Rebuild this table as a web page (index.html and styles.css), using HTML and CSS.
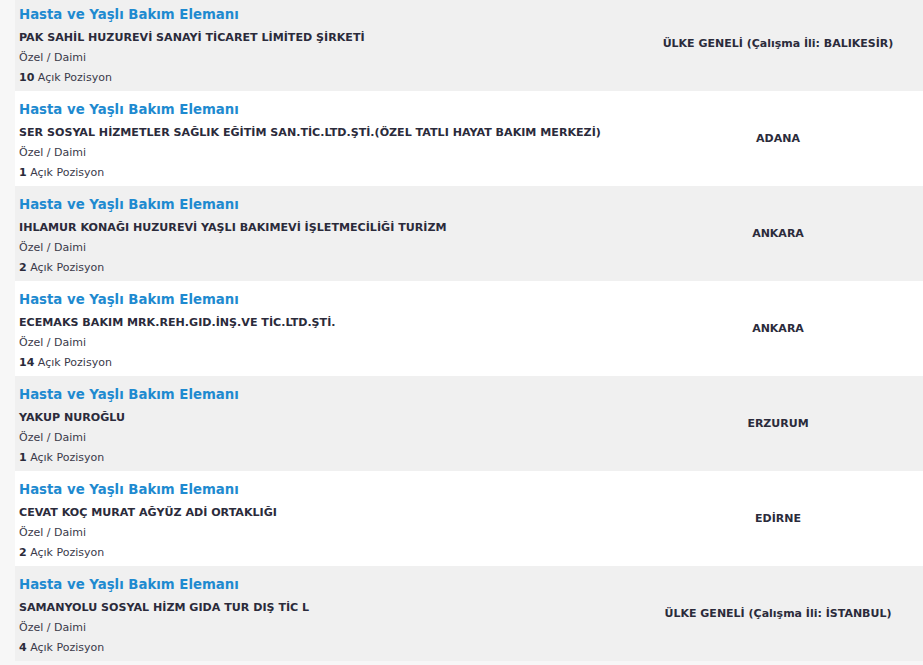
FILE: index.html
```html
<!DOCTYPE html>
<html lang="tr">
<head>
<meta charset="utf-8">
<title>İlanlar</title>
<link rel="stylesheet" href="styles.css">
</head>
<body>
<div class="list">
  <div class="row odd">
    <div class="info">
      <a class="title">Hasta ve Yaşlı Bakım Elemanı</a>
      <div class="company">PAK SAHİL HUZUREVİ SANAYİ TİCARET LİMİTED ŞİRKETİ</div>
      <div class="meta">Özel / Daimi</div>
      <div class="meta"><b>10</b> Açık Pozisyon</div>
    </div>
    <div class="loc">ÜLKE GENELİ (Çalışma İli: BALIKESİR)</div>
  </div>
  <div class="row">
    <div class="info">
      <a class="title">Hasta ve Yaşlı Bakım Elemanı</a>
      <div class="company">SER SOSYAL HİZMETLER SAĞLIK EĞİTİM SAN.TİC.LTD.ŞTİ.(ÖZEL TATLI HAYAT BAKIM MERKEZİ)</div>
      <div class="meta">Özel / Daimi</div>
      <div class="meta"><b>1</b> Açık Pozisyon</div>
    </div>
    <div class="loc">ADANA</div>
  </div>
  <div class="row odd">
    <div class="info">
      <a class="title">Hasta ve Yaşlı Bakım Elemanı</a>
      <div class="company">IHLAMUR KONAĞI HUZUREVİ YAŞLI BAKIMEVİ İŞLETMECİLİĞİ TURİZM</div>
      <div class="meta">Özel / Daimi</div>
      <div class="meta"><b>2</b> Açık Pozisyon</div>
    </div>
    <div class="loc">ANKARA</div>
  </div>
  <div class="row">
    <div class="info">
      <a class="title">Hasta ve Yaşlı Bakım Elemanı</a>
      <div class="company">ECEMAKS BAKIM MRK.REH.GID.İNŞ.VE TİC.LTD.ŞTİ.</div>
      <div class="meta">Özel / Daimi</div>
      <div class="meta"><b>14</b> Açık Pozisyon</div>
    </div>
    <div class="loc">ANKARA</div>
  </div>
  <div class="row odd">
    <div class="info">
      <a class="title">Hasta ve Yaşlı Bakım Elemanı</a>
      <div class="company">YAKUP NUROĞLU</div>
      <div class="meta">Özel / Daimi</div>
      <div class="meta"><b>1</b> Açık Pozisyon</div>
    </div>
    <div class="loc">ERZURUM</div>
  </div>
  <div class="row">
    <div class="info">
      <a class="title">Hasta ve Yaşlı Bakım Elemanı</a>
      <div class="company">CEVAT KOÇ MURAT AĞYÜZ ADİ ORTAKLIĞI</div>
      <div class="meta">Özel / Daimi</div>
      <div class="meta"><b>2</b> Açık Pozisyon</div>
    </div>
    <div class="loc">EDİRNE</div>
  </div>
  <div class="row odd">
    <div class="info">
      <a class="title">Hasta ve Yaşlı Bakım Elemanı</a>
      <div class="company">SAMANYOLU SOSYAL HİZM GIDA TUR DIŞ TİC L</div>
      <div class="meta">Özel / Daimi</div>
      <div class="meta"><b>4</b> Açık Pozisyon</div>
    </div>
    <div class="loc">ÜLKE GENELİ (Çalışma İli: İSTANBUL)</div>
  </div>
</div>
</body>
</html>
```
FILE: styles.css
```css
html, body {
  margin: 0;
  padding: 0;
}
body {
  background: #f7f7f7;
  font-family: "DejaVu Sans", Verdana, sans-serif;
  color: #333;
  overflow: hidden;
}
.list {
  margin: -4px 0 0 15px;
}
.row {
  display: grid;
  grid-template-columns: 618px 1fr;
  height: 95px;
  align-items: center;
  background: #fff;
}
.row.odd {
  background: #f0f0f0;
}
.info {
  align-self: start;
  padding: 8px 4px 0 4px;
  white-space: nowrap;
}
.title {
  display: block;
  font-size: 13.3px;
  font-weight: bold;
  line-height: 22px;
  color: #1e8ad0;
  text-decoration: none;
}
.company {
  margin: 3px 0 1px;
  font-size: 11.1px;
  font-weight: bold;
  line-height: 18px;
  color: #2b2b3b;
}
.meta {
  font-size: 11px;
  line-height: 20px;
  color: #3a3a4a;
}
.meta b {
  color: #2b2b3b;
}
.loc {
  text-align: center;
  font-size: 11px;
  font-weight: bold;
  color: #2b2b3b;
  white-space: nowrap;
}
```
